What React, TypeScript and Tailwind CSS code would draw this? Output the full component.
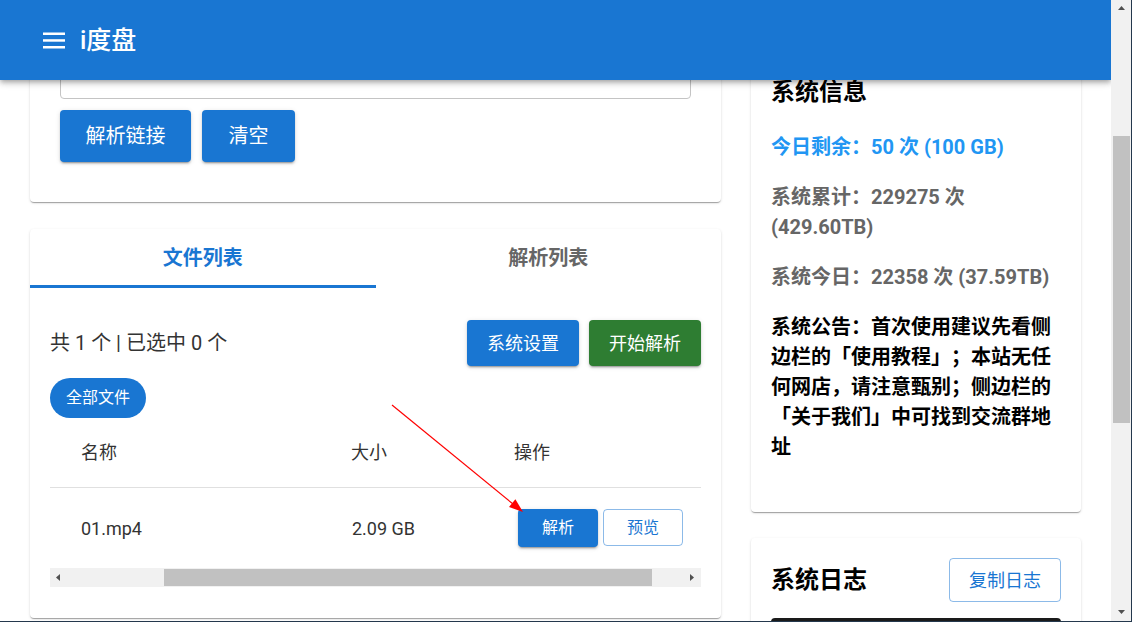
import React from 'react';

const cardShadow =
    'shadow-[0_2px_1px_-1px_rgba(0,0,0,0.2),0_1px_1px_0_rgba(0,0,0,0.14),0_1px_3px_0_rgba(0,0,0,0.12)]';
const btnShadow =
    'shadow-[0_3px_1px_-2px_rgba(0,0,0,0.2),0_2px_2px_0_rgba(0,0,0,0.14),0_1px_5px_0_rgba(0,0,0,0.12)]';

function Arrow({ dir }: { dir: 'up' | 'down' | 'left' | 'right' }) {
    const pts = {
        up: '1,6 4.5,2 8,6',
        down: '1,2 4.5,6 8,2',
        left: '6,1 2,4.5 6,8',
        right: '2,1 6,4.5 2,8',
    }[dir];
    return (
        <svg width="9" height="9" viewBox="0 0 9 9">
            <polygon points={pts} fill="#505050" />
        </svg>
    );
}

function Header() {
    return (
        <header className="absolute top-0 left-0 right-0 z-20 h-20 bg-[#1976d2] flex items-center pl-[43px] shadow-[0_2px_4px_-1px_rgba(0,0,0,0.2),0_4px_5px_0_rgba(0,0,0,0.14),0_1px_10px_0_rgba(0,0,0,0.12)]">
            <svg width="22" height="17" viewBox="0 0 22 17" className="mr-[15px]">
                <rect x="0" y="0.5" width="22" height="2.5" fill="#fff" />
                <rect x="0" y="7.2" width="22" height="2.5" fill="#fff" />
                <rect x="0" y="14" width="22" height="2.5" fill="#fff" />
            </svg>
            <h1 className="text-white text-[25px] font-medium leading-none">i度盘</h1>
        </header>
    );
}

function FilePanel() {
    return (
        <div className={`bg-white rounded-[4px] ${cardShadow}`}>
            <div className="flex">
                <div className="flex-1 h-[59px] flex flex-col">
                    <div className="flex-1 flex items-center justify-center pt-[2px] text-[20px] font-bold text-[#1976d2]">文件列表</div>
                    <div className="h-[3px] bg-[#1976d2]" />
                </div>
                <div className="flex-1 h-[59px] flex flex-col">
                    <div className="flex-1 flex items-center justify-center pt-[2px] text-[20px] font-bold text-[#666]">解析列表</div>
                    <div className="h-[3px]" />
                </div>
            </div>

            <div className="px-5 pt-8 pb-[31px]">
                <div className="flex items-center justify-between h-[46px]">
                    <span className="text-[20px] text-[#333]">共 1 个 | 已选中 0 个</span>
                    <div className="flex gap-[10px]">
                        <button className={`w-[112px] h-[46px] rounded-[4px] bg-[#1976d2] text-white text-[18px] ${btnShadow}`}>系统设置</button>
                        <button className={`w-[112px] h-[46px] rounded-[4px] bg-[#2e7d32] text-white text-[18px] ${btnShadow}`}>开始解析</button>
                    </div>
                </div>

                <button className="mt-3 w-[96px] h-10 rounded-full bg-[#1976d2] text-white text-[16px]">全部文件</button>

                <div className="flex items-center h-[70px] border-b border-[#e0e0e0] text-[18px] text-[#333]">
                    <div className="w-[270px] pl-[31px]">名称</div>
                    <div className="w-[163px] pl-[31px]">大小</div>
                    <div className="flex-1 pl-[31px]">操作</div>
                </div>
                <div className="flex items-center h-[80px] text-[18px] text-[#333]">
                    <div className="w-[270px] pl-[31px]">01.mp4</div>
                    <div className="w-[163px] pl-[32px]">2.09 GB</div>
                    <div className="flex-1 pl-[35px] flex gap-[5px]">
                        <button className={`w-20 h-[38px] rounded-[4px] bg-[#1976d2] text-white text-[16px] ${btnShadow}`}>解析</button>
                        <button className="w-20 h-[37px] rounded-[4px] border border-[#1976d2]/50 text-[#1976d2] text-[16px]">预览</button>
                    </div>
                </div>

                <div className="flex items-center h-[19px] bg-[#f1f1f1]">
                    <div className="w-[17px] flex justify-center"><Arrow dir="left" /></div>
                    <div className="flex-1 flex items-center">
                        <div className="ml-[97px] w-[488px] h-[17px] bg-[#c1c1c1]" />
                    </div>
                    <div className="w-[17px] flex justify-center"><Arrow dir="right" /></div>
                </div>
            </div>
        </div>
    );
}

function InfoCard() {
    return (
        <div className={`bg-white rounded-[4px] px-5 pt-5 pb-[50px] ${cardShadow}`}>
            <h2 className="text-[24px] leading-8 font-bold text-black mb-6">系统信息</h2>
            <div className="text-[20px] leading-[30px] font-bold flex flex-col gap-5 [text-spacing-trim:space-all]">
                <p className="text-[#2196f3]">今日剩余：50 次 (100 GB)</p>
                <p className="text-[#666]">系统累计：229275 次 (429.60TB)</p>
                <p className="text-[#666]">系统今日：22358 次 (37.59TB)</p>
                <p className="text-black">系统公告：首次使用建议先看侧边栏的「使用教程」；本站无任何网店，请注意甄别；侧边栏的「关于我们」中可找到交流群地址</p>
            </div>
        </div>
    );
}

function LogCard() {
    return (
        <div className={`bg-white rounded-[4px] px-5 pt-5 ${cardShadow}`}>
            <div className="flex items-center justify-between h-11">
                <h2 className="text-[24px] font-bold text-black">系统日志</h2>
                <button className="w-[112px] h-11 rounded-[4px] border border-[#1976d2]/50 text-[#1976d2] text-[18px]">复制日志</button>
            </div>
            <div className="mt-4 h-[200px] rounded-[4px] bg-[#1a1a1a]" />
        </div>
    );
}

export default function App() {
    return (
        <div
            className="w-[1132px] h-[622px] overflow-hidden flex bg-white border-r border-b border-[#24384d]"
            style={{ fontFamily: 'Roboto, "Noto Sans CJK SC", sans-serif' }}
        >
            <main className="relative flex-1 h-full overflow-hidden">
                <Header />

                <div className="flex items-start gap-[30px] px-[30px]">
                    <div className="w-[691px] flex flex-col gap-[27px]">
                        <div className={`bg-white rounded-[4px] px-[30px] pt-[30px] pb-10 ${cardShadow}`}>
                            <div className="h-[69px] rounded-[4px] border border-[#c4c4c4]" />
                            <div className="mt-[11px] flex gap-[11px]">
                                <button className={`w-[131px] h-[52px] rounded-[4px] bg-[#1976d2] text-white text-[20px] ${btnShadow}`}>解析链接</button>
                                <button className={`w-[93px] h-[52px] rounded-[4px] bg-[#1976d2] text-white text-[20px] ${btnShadow}`}>清空</button>
                            </div>
                        </div>
                        <FilePanel />
                    </div>

                    <div className="w-[330px] pt-14 flex flex-col gap-[26px]">
                        <InfoCard />
                        <LogCard />
                    </div>
                </div>

                <svg className="absolute inset-0 pointer-events-none z-10" width="1111" height="621">
                    <line x1="392" y1="405" x2="513" y2="504" stroke="#ff0000" strokeWidth="1.2" />
                    <polygon points="523,512 509,507 515.4,499.2" fill="#ff0000" />
                </svg>
            </main>

            <aside className="w-5 h-full bg-[#f1f1f1] flex flex-col">
                <div className="h-[17px] flex items-center justify-center"><Arrow dir="up" /></div>
                <div className="flex-1 flex justify-center">
                    <div className="mt-[119px] w-[17px] h-[287px] bg-[#c1c1c1]" />
                </div>
                <div className="h-[17px] flex items-center justify-center"><Arrow dir="down" /></div>
            </aside>
        </div>
    );
}
